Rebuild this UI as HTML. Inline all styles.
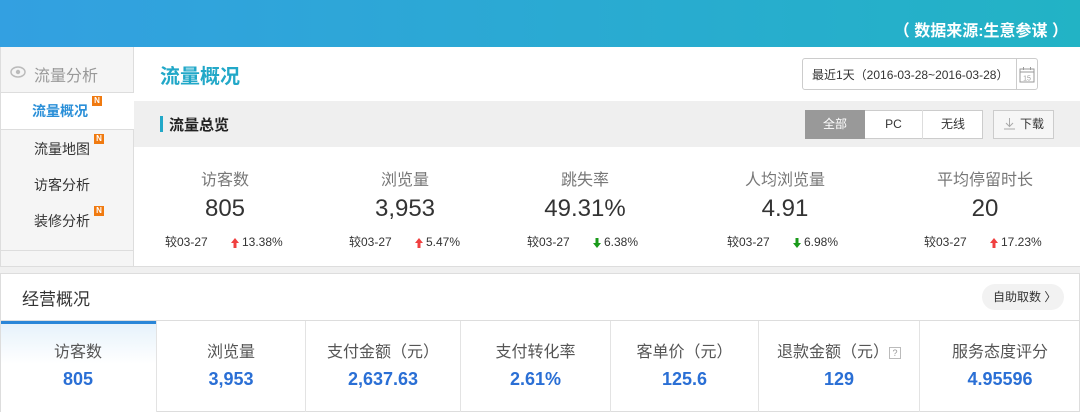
<!DOCTYPE html>
<html><head><meta charset="utf-8"><style>
*{margin:0;padding:0;box-sizing:border-box}
body{width:1080px;height:412px;overflow:hidden;background:#f0f0f0;font-family:"Liberation Sans","Noto Sans CJK SC",sans-serif;position:relative}
.a{position:absolute;white-space:nowrap}
.hdr{left:0;top:0;width:1080px;height:47px;background:linear-gradient(90deg,#33a0e1,#22b3c5)}
.side{left:0;top:47px;width:134px;height:220px;background:#f5f5f5;border:1px solid #ddd;border-top:none}
.main{left:134px;top:47px;width:946px;height:220px;background:#fff;border-bottom:1px solid #ddd}
.n{width:10px;height:10px;background:#f07a10;color:#fff;font-size:8px;line-height:10px;text-align:center;font-weight:bold}
.c{text-align:center;transform:translateX(-50%)}
.sm,.pc{font-size:12px;color:#333;line-height:14px;height:14px;top:235px}
.col{position:absolute;top:321px;height:91px;border-right:1px solid #e3e3e3;text-align:center}
.col .l{position:absolute;top:17px;left:0;right:0;font-size:16px;color:#555}
.col .v{position:absolute;top:48px;left:0;right:0;font-size:18px;color:#2a6fd5;font-weight:bold}
</style></head><body>
<div class="a hdr"></div>
<div class="a" style="right:12px;top:17px;color:#fff;font-size:16px;font-weight:bold">（ 数据来源:生意参谋 ）</div>

<div class="a side"></div>
<svg class="a" style="left:10px;top:66px" width="16" height="12" viewBox="0 0 16 12"><ellipse cx="8" cy="6" rx="7" ry="5" fill="none" stroke="#bbb" stroke-width="1.5"/><circle cx="8" cy="6" r="2.2" fill="#bbb"/></svg>
<div class="a" style="left:34px;top:62px;font-size:16px;color:#999">流量分析</div>
<div class="a" style="left:1px;top:92px;width:133px;height:38px;background:#fff;border-top:1px solid #ddd;border-bottom:1px solid #ddd"></div>
<div class="a" style="left:32px;top:101px;font-size:14px;color:#2a8fd8;font-weight:bold">流量概况</div>
<div class="a n" style="left:92px;top:96px">N</div>
<div class="a" style="left:34px;top:139px;font-size:14px;color:#333">流量地图</div>
<div class="a n" style="left:94px;top:134px">N</div>
<div class="a" style="left:34px;top:175px;font-size:14px;color:#333">访客分析</div>
<div class="a" style="left:34px;top:211px;font-size:14px;color:#333">装修分析</div>
<div class="a n" style="left:94px;top:206px">N</div>
<div class="a" style="left:1px;top:250px;width:132px;border-top:1px solid #ddd"></div>

<div class="a main"></div>
<div class="a" style="left:160px;top:60px;font-size:20px;color:#22a8c8;font-weight:bold">流量概况</div>
<div class="a" style="left:802px;top:58px;width:236px;height:32px;border:1px solid #ccc;border-radius:3px;background:#fff"></div>
<div class="a" style="left:812px;top:66px;font-size:12px;color:#333">最近1天（2016-03-28~2016-03-28）</div>
<div class="a" style="left:1016px;top:58px;height:32px;border-left:1px solid #ccc"></div>
<svg class="a" style="left:1019px;top:66px" width="16" height="17" viewBox="0 0 16 17"><rect x="1" y="3" width="14" height="13" fill="none" stroke="#999"/><line x1="1" y1="6" x2="15" y2="6" stroke="#999"/><line x1="4.5" y1="1" x2="4.5" y2="4" stroke="#999"/><line x1="11.5" y1="1" x2="11.5" y2="4" stroke="#999"/><text x="8" y="14.5" font-size="7" fill="#999" text-anchor="middle" font-family="Liberation Sans">15</text></svg>
<div class="a" style="left:134px;top:101px;width:946px;height:46px;background:#efefef"></div>
<div class="a" style="left:160px;top:116px;width:3px;height:16px;background:#22a8c8"></div>
<div class="a" style="left:169px;top:114px;font-size:15px;color:#222;font-weight:bold">流量总览</div>
<div class="a" style="left:805px;top:110px;width:178px;height:29px;border:1px solid #ccc;background:#fff"></div>
<div class="a" style="left:805px;top:110px;width:60px;height:29px;background:#999;color:#fff;font-size:12px;line-height:29px;text-align:center">全部</div>
<div class="a" style="left:865px;top:110px;width:58px;height:29px;border-right:1px solid #ddd;font-size:12px;line-height:29px;text-align:center;color:#333">PC</div>
<div class="a" style="left:923px;top:110px;width:60px;height:29px;font-size:12px;line-height:29px;text-align:center;color:#333">无线</div>
<div class="a" style="left:993px;top:110px;width:61px;height:29px;border:1px solid #ccc;background:#f6f6f6;font-size:12px;line-height:27px;color:#333;padding-left:26px">下载</div>
<svg class="a" style="left:1003px;top:117px" width="13" height="13" viewBox="0 0 13 13"><path d="M6.5 1v8M3 6l3.5 3.5L10 6M1 12h11" fill="none" stroke="#aaa"/></svg>

<svg width="0" height="0" style="position:absolute"><defs>
<path id="up" d="M5 1L1 6h2.5v5h3V6H9z" fill="#f04040"/>
<path id="dn" d="M5 11L1 6h2.5V1h3v5H9z" fill="#1a9a1a"/></defs></svg>

<div class="a c" style="left:225px;top:166px;font-size:16px;color:#777">访客数</div>
<div class="a c" style="left:225px;top:195px;font-size:24px;color:#333">805</div>
<div class="a sm" style="left:165px">较03-27</div><svg class="a" style="left:230px;top:237px" width="10" height="12"><use href="#up"/></svg><div class="a pc" style="left:242px">13.38%</div>

<div class="a c" style="left:405px;top:166px;font-size:16px;color:#777">浏览量</div>
<div class="a c" style="left:405px;top:195px;font-size:24px;color:#333">3,953</div>
<div class="a sm" style="left:349px">较03-27</div><svg class="a" style="left:414px;top:237px" width="10" height="12"><use href="#up"/></svg><div class="a pc" style="left:426px">5.47%</div>

<div class="a c" style="left:585px;top:166px;font-size:16px;color:#777">跳失率</div>
<div class="a c" style="left:585px;top:195px;font-size:24px;color:#333">49.31%</div>
<div class="a sm" style="left:527px">较03-27</div><svg class="a" style="left:592px;top:237px" width="10" height="12"><use href="#dn"/></svg><div class="a pc" style="left:604px">6.38%</div>

<div class="a c" style="left:785px;top:166px;font-size:16px;color:#777">人均浏览量</div>
<div class="a c" style="left:785px;top:195px;font-size:24px;color:#333">4.91</div>
<div class="a sm" style="left:727px">较03-27</div><svg class="a" style="left:792px;top:237px" width="10" height="12"><use href="#dn"/></svg><div class="a pc" style="left:804px">6.98%</div>

<div class="a c" style="left:985px;top:166px;font-size:16px;color:#777">平均停留时长</div>
<div class="a c" style="left:985px;top:195px;font-size:24px;color:#333">20</div>
<div class="a sm" style="left:924px">较03-27</div><svg class="a" style="left:989px;top:237px" width="10" height="12"><use href="#up"/></svg><div class="a pc" style="left:1001px">17.23%</div>

<div class="a" style="left:0;top:273px;width:1080px;height:139px;background:#fff;border:1px solid #ddd"></div>
<div class="a" style="left:22px;top:285px;font-size:17px;color:#333">经营概况</div>
<div class="a" style="left:982px;top:284px;width:82px;height:26px;border-radius:13px;background:#f2f2f2;font-size:12px;line-height:26px;color:#333;padding-left:11px">自助取数 〉</div>
<div class="a" style="left:0;top:320px;width:1080px;border-top:1px solid #ddd"></div>
<div class="a" style="left:1px;top:321px;width:156px;height:91px;background:linear-gradient(#e6f2fb,#fff 45%);border-top:3px solid #2a86d8"></div>
<div class="col" style="left:0;width:157px"><div class="l">访客数</div><div class="v">805</div></div>
<div class="col" style="left:157px;width:149px"><div class="l">浏览量</div><div class="v">3,953</div></div>
<div class="col" style="left:306px;width:155px"><div class="l">支付金额（元）</div><div class="v">2,637.63</div></div>
<div class="col" style="left:461px;width:150px"><div class="l">支付转化率</div><div class="v">2.61%</div></div>
<div class="col" style="left:611px;width:148px"><div class="l">客单价（元）</div><div class="v">125.6</div></div>
<div class="col" style="left:759px;width:161px"><div class="l">退款金额（元）<span style="display:inline-block;width:12px;height:12px;border:1px solid #bbb;font-size:9px;line-height:10px;color:#999;vertical-align:1px">?</span></div><div class="v">129</div></div>
<div class="col" style="left:920px;width:160px;border:none"><div class="l">服务态度评分</div><div class="v">4.95596</div></div>
</body></html>
